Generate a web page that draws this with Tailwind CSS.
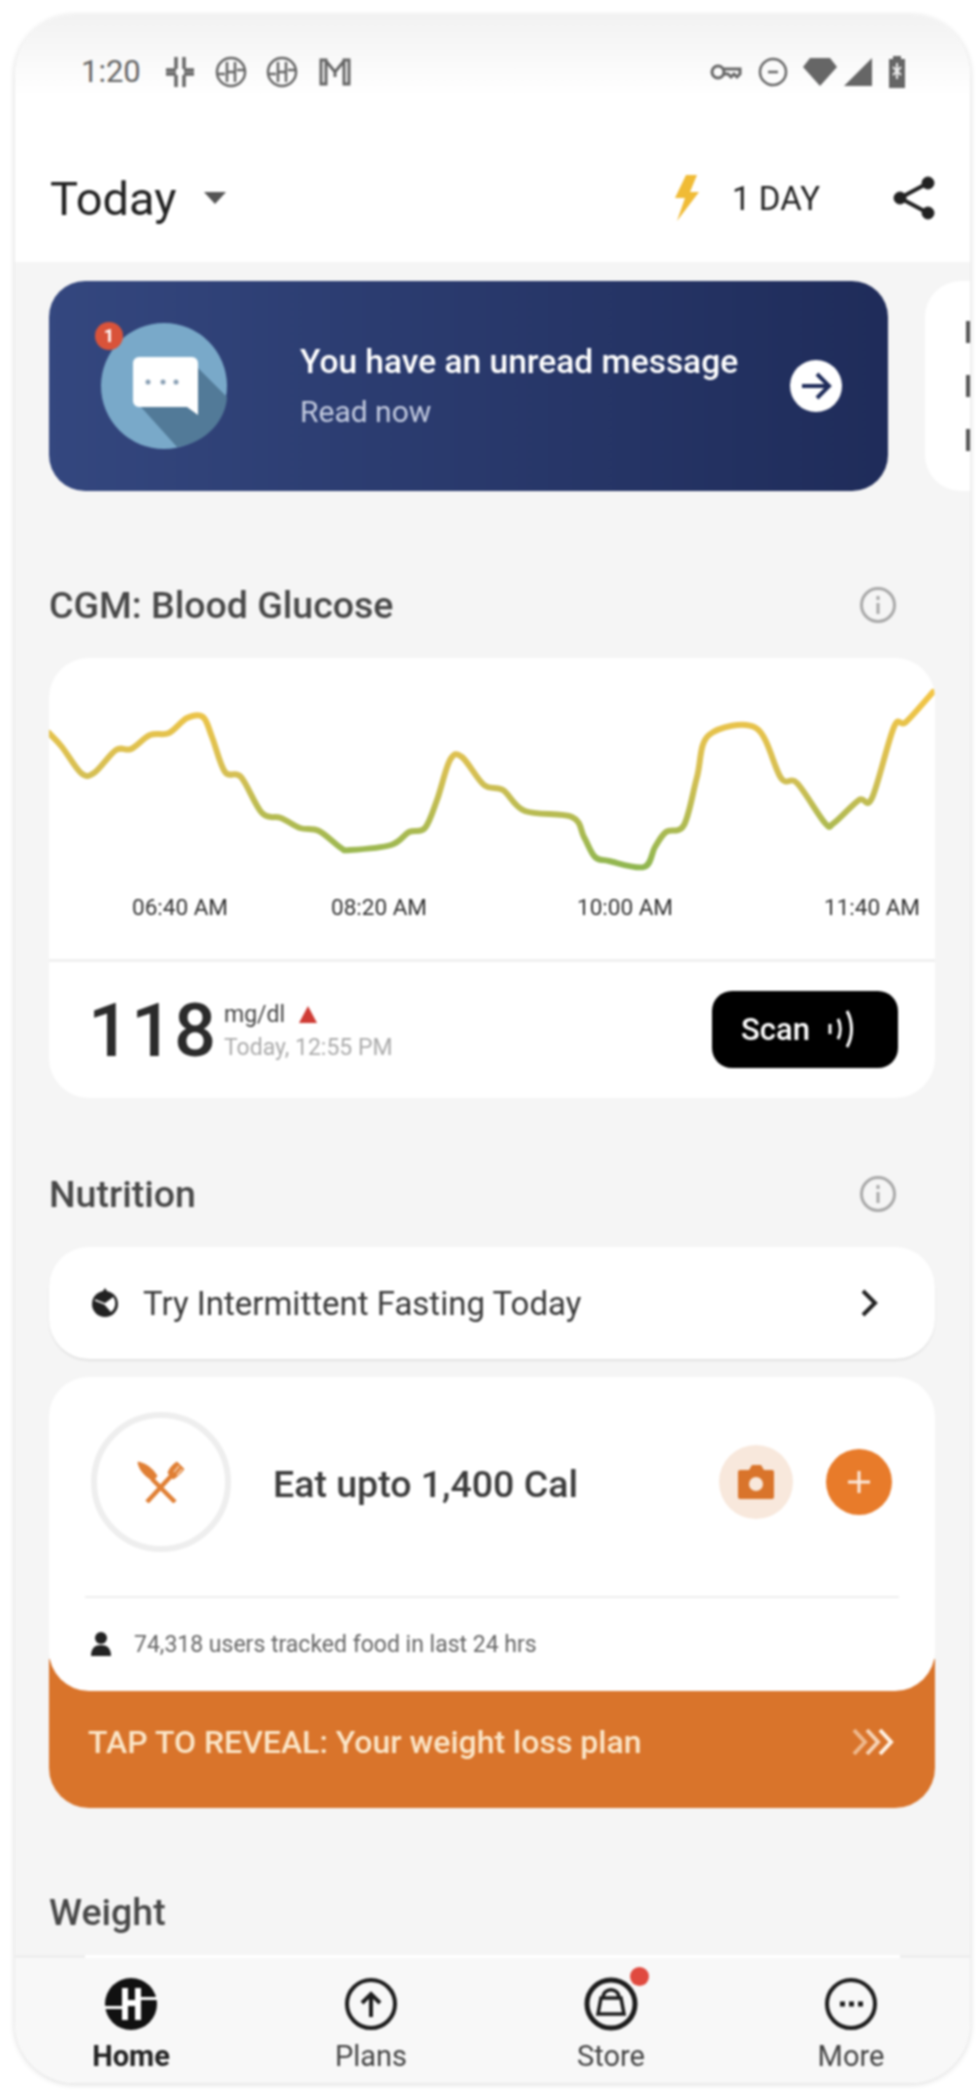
<!DOCTYPE html>
<html lang="en">
<head>
  <meta charset="UTF-8" />
  <title>Today</title>
  <script src="https://cdn.jsdelivr.net/npm/@tailwindcss/browser@4"></script>
</head>
<body class="bg-white font-['Roboto',sans-serif]">
  <div class="w-[980px] h-[2093px] pt-[15px] pl-[15px]">
    <div class="w-[955px] h-[2068px] rounded-[60px] overflow-hidden flex flex-col bg-white shadow-[0_1px_6px_rgba(0,0,0,0.16)] blur-[0.8px]">

      <!-- status bar -->
      <div class="h-[114px] shrink-0 pl-[66px] pr-[64px] flex items-center justify-between bg-linear-to-b from-[#f2f2f2] to-white to-70% text-[#666]">
        <div class="flex items-center">
          <span class="text-[31px] w-[83px]">1:20</span>
          <svg class="w-[32px] h-[32px] mr-[19px]" viewBox="0 0 32 32" fill="none" stroke="#666" stroke-width="3.5"><path d="M12 1v12M20 1v12M12 19v12M20 19v12M2 14h10M20 14h10M2 18h10M20 18h10"/></svg>
          <svg class="w-[32px] h-[32px] mr-[19px]" viewBox="0 0 32 32" fill="none" stroke="#666" stroke-width="2.5"><circle cx="16" cy="16" r="14"/><path d="M12 6v20M20 6v20M2 18h8M22 14h8M12 16h8"/></svg>
          <svg class="w-[32px] h-[32px] mr-[20px]" viewBox="0 0 32 32" fill="none" stroke="#666" stroke-width="2.5"><circle cx="16" cy="16" r="14"/><path d="M12 6v20M20 6v20M2 18h8M22 14h8M12 16h8"/></svg>
          <svg class="w-[34px] h-[30px]" viewBox="0 0 34 30" fill="none" stroke="#666" stroke-width="3"><path d="M3 3h5v24H3zM31 3h-5v24h5zM8 4l9 11 9-11M17 15v5"/></svg>
        </div>
        <div class="flex items-center">
          <svg class="w-[32px] h-[20px] mr-[16px]" viewBox="0 0 32 20" fill="none" stroke="#666" stroke-width="3"><circle cx="8" cy="10" r="6"/><path d="M14 7h16v5l-3 3-3-3-3 3-3-3h-4"/></svg>
          <svg class="w-[30px] h-[30px] mr-[14px]" viewBox="0 0 30 30" fill="none" stroke="#666" stroke-width="2.5"><circle cx="15" cy="15" r="13"/><path d="M10 15h10"/></svg>
          <svg class="w-[36px] h-[30px] mr-[6px]" viewBox="0 0 36 30" fill="#666"><path d="M8 1h20l7 9-17 19L1 10z"/></svg>
          <svg class="w-[28px] h-[28px] mr-[16px]" viewBox="0 0 28 28" fill="#666"><path d="M28 0v28H0z"/></svg>
          <svg class="w-[18px] h-[32px]" viewBox="0 0 18 32" fill="#666"><path d="M5 0h8v3h4v29H1V3h4z"/><path d="M9 7v16M5 11l8 8M5 19l8-8" stroke="#eee" stroke-width="2" fill="none"/></svg>
        </div>
      </div>

      <!-- header -->
      <div class="h-[133px] shrink-0 pl-[35px] pr-[34px] pt-[5px] flex items-center justify-between">
        <div class="flex items-center">
          <span class="text-[47px] leading-none text-[#222]">Today</span>
          <svg class="w-[22px] h-[12px] ml-[27px]" viewBox="0 0 22 12" fill="#555"><path d="M0 0h22L11 12z"/></svg>
        </div>
        <div class="flex items-center">
          <svg class="w-[28px] h-[46px] mr-[32px]" viewBox="0 0 28 46" fill="#f0bb35"><path d="M14 0h11l-7 17h9L5 46l8-23H3z"/></svg>
          <span class="text-[33px] leading-none text-[#222] mr-[72px]">1 DAY</span>
          <svg class="w-[44px] h-[46px]" viewBox="0 0 44 46" fill="#222" stroke="#222"><circle cx="36" cy="8" r="6"/><circle cx="36" cy="38" r="6"/><circle cx="8" cy="23" r="6"/><path d="M36 8L8 23l28 15" fill="none" stroke-width="4"/></svg>
        </div>
      </div>

      <!-- scrolling content -->
      <div class="flex-1 min-h-0 overflow-hidden bg-[#f5f5f5] pl-[34px]">
        <div class="mt-[19px] flex gap-[37px] w-[1000px]">
          <div class="w-[839px] h-[210px] shrink-0 rounded-[36px] bg-linear-to-r from-[#34477f] to-[#1f2c5a] flex items-center pl-[52px] pr-[46px]">
            <div class="relative w-[126px] h-[126px] shrink-0">
              <svg class="w-[126px] h-[126px]" viewBox="0 0 126 126">
                <circle cx="63" cy="63" r="63" fill="#79a9c9"/>
                <path d="M96 44l30 30c-1 22-20 46-50 50L40 84z" fill="#527a98"/>
                <path d="M38 34h53a6 6 0 0 1 6 6v52l-11-8H38a6 6 0 0 1-6-6V40a6 6 0 0 1 6-6z" fill="#fff"/>
                <circle cx="47" cy="59" r="2.5" fill="#8aa0b4"/><circle cx="62" cy="59" r="2.5" fill="#8aa0b4"/><circle cx="75" cy="59" r="2.5" fill="#8aa0b4"/>
              </svg>
              <div class="absolute -left-[6px] -top-[1px] w-[28px] h-[28px] rounded-full bg-[#d9533a] flex items-center justify-center text-[18px] leading-none font-bold text-white">1</div>
            </div>
            <div class="flex-1 pl-[73px] whitespace-nowrap">
              <div class="text-[33.5px] leading-none font-medium text-white">You have an unread message</div>
              <div class="text-[30px] leading-none text-[#c3cbe0] mt-[18px]">Read now</div>
            </div>
            <div class="w-[52px] h-[52px] rounded-full bg-white flex items-center justify-center shrink-0">
              <svg class="w-[34px] h-[30px]" viewBox="0 0 34 30" fill="none" stroke="#1f2c5a" stroke-width="4"><path d="M3 15h27M18 3l12 12-12 12"/></svg>
            </div>
          </div>
          <div class="w-[100px] h-[210px] shrink-0 rounded-[36px] bg-white pl-[41px] flex flex-col justify-center gap-[32px]">
            <div class="w-[4px] h-[22px] bg-[#555]"></div>
            <div class="w-[4px] h-[22px] bg-[#555]"></div>
            <div class="w-[4px] h-[22px] bg-[#555]"></div>
          </div>
        </div>

        <div class="mt-[94px] w-[886px] h-[40px] flex items-center justify-between pr-[38px]">
          <span class="text-[37.5px] font-medium text-[#484848]">CGM: Blood Glucose</span>
          <svg class="w-[38px] h-[38px]" viewBox="0 0 38 38" fill="none" stroke="#a8a8a8" stroke-width="3"><circle cx="19" cy="19" r="16.5"/><path d="M19 17v11M19 10v4"/></svg>
        </div>

        <div class="mt-[33px] w-[886px] h-[440px] rounded-[40px] bg-white overflow-hidden flex flex-col">
          <svg class="w-[886px] h-[301px] shrink-0" viewBox="0 1 886 301">
            <defs>
              <linearGradient id="glucose" gradientUnits="userSpaceOnUse" x1="0" y1="35" x2="0" y2="215">
                <stop offset="0" stop-color="#f3c544"/>
                <stop offset="0.45" stop-color="#d6bf53"/>
                <stop offset="1" stop-color="#8cb650"/>
              </linearGradient>
            </defs>
            <path id="curve" fill="none" stroke="url(#glucose)" stroke-width="6" stroke-linejoin="round" stroke-linecap="round"/>
            <g class="font-['Roboto',sans-serif]" font-size="22.5" fill="#333" text-anchor="middle">
              <text x="131" y="258">06:40 AM</text>
              <text x="330" y="258">08:20 AM</text>
              <text x="576" y="258">10:00 AM</text>
              <text x="823" y="258">11:40 AM</text>
            </g>
          </svg>
          <div class="h-[3px] shrink-0 bg-[#f0f0f0]"></div>
          <div class="flex-1 flex items-center pl-[39px] pr-[37px] pt-[2px]">
            <span class="text-[74px] leading-none font-medium text-[#2b2b2b] w-[136px] tracking-[1px]">118</span>
            <div class="flex-1">
              <div class="flex items-center text-[23px] leading-none text-[#444]">mg/dl
                <svg class="w-[18px] h-[17px] ml-[14px]" viewBox="0 0 18 17" fill="#cf3b34"><path d="M9 0l9 17H0z"/></svg>
              </div>
              <div class="text-[23px] leading-none text-[#aaa] mt-[10px]">Today, 12:55 PM</div>
            </div>
            <div class="w-[186px] h-[77px] rounded-[20px] bg-black flex items-center pl-[29px] mb-[4px]">
              <span class="text-[31px] font-medium text-white leading-none">Scan</span>
              <svg class="w-[30px] h-[44px] ml-[17px]" viewBox="0 0 30 44" fill="none" stroke="#fff" stroke-width="3"><path d="M3 17v10M11 12c3 6 3 14 0 20M20 4c6 11 6 25 0 36"/></svg>
            </div>
          </div>
        </div>

        <div class="mt-[76px] w-[886px] h-[40px] flex items-center justify-between pr-[38px]">
          <span class="text-[37.5px] font-medium text-[#484848]">Nutrition</span>
          <svg class="w-[38px] h-[38px]" viewBox="0 0 38 38" fill="none" stroke="#a8a8a8" stroke-width="3"><circle cx="19" cy="19" r="16.5"/><path d="M19 17v11M19 10v4"/></svg>
        </div>

        <div class="mt-[33px] w-[886px] h-[112px] rounded-[40px] bg-white shadow-[0_2px_2px_rgba(0,0,0,0.08)] flex items-center pl-[42px] pr-[56px]">
          <svg class="w-[28px] h-[32px] shrink-0" viewBox="0 0 28 32"><circle cx="14" cy="17" r="13" fill="#222"/><path d="M14 1l4 6h-8z" fill="#222"/><path d="M14 17l8-6a10 10 0 0 1-2 13zM14 17L4 13" fill="#fff" stroke="#fff" stroke-width="1.5"/></svg>
          <span class="flex-1 text-[33px] leading-none text-[#3a3a3a] ml-[24px]">Try Intermittent Fasting Today</span>
          <svg class="w-[20px] h-[30px]" viewBox="0 0 20 30" fill="none" stroke="#222" stroke-width="4"><path d="M4 3l12 12L4 27"/></svg>
        </div>

        <div class="mt-[18px] w-[886px]">
          <div class="relative z-10 h-[314px] rounded-[40px] bg-white">
            <div class="h-[219px] pl-[42px] pr-[43px] pt-[35px] flex items-start">
              <div class="w-[140px] h-[140px] shrink-0 rounded-full border-[6px] border-[#eeeeee] flex items-center justify-center">
                <svg class="w-[48px] h-[42px]" viewBox="0 0 48 42" fill="none" stroke="#e07f34"><path d="M1 1c9 2 15 7 19 14l-4 5C8 15 2 9 1 1z" fill="#e07f34" stroke-width="1"/><path d="M15 18L38 41" stroke-width="4.500"/><path d="M35 14L10 41" stroke-width="4.500"/><path d="M31 12c1-4 5-9 9-11l7 7c-3 4-7 8-11 10z" fill="#e07f34" stroke-width="1"/><path d="M37 11l5-6M40 14l5-6" stroke="#f6cfae" stroke-width="1.500"/></svg>
              </div>
              <span class="ml-[42px] mt-[54px] text-[37.5px] leading-none font-medium text-[#3c3c3c] flex-1">Eat upto 1,400 Cal</span>
              <div class="w-[74px] h-[74px] mt-[33px] rounded-full bg-[#f8e8dc] flex items-center justify-center">
                <svg class="w-[38px] h-[36px]" viewBox="0 0 38 36"><path d="M3 6h9l3-5h9l3 5h8a2 2 0 0 1 2 2v25a2 2 0 0 1-2 2H3a2 2 0 0 1-2-2V8a2 2 0 0 1 2-2z" fill="#d9742b"/><circle cx="19" cy="20" r="7" fill="#f8e8dc"/></svg>
              </div>
              <div class="w-[66px] h-[66px] mt-[37px] ml-[33px] rounded-full bg-[#e87b2a] flex items-center justify-center">
                <svg class="w-[24px] h-[24px]" viewBox="0 0 24 24" fill="none" stroke="#fbeadd" stroke-width="3"><path d="M12 1v22M1 12h22"/></svg>
              </div>
            </div>
            <div class="h-[2px] mx-[36px] bg-[#eeeeee]"></div>
            <div class="flex items-center pl-[42px] h-[93px] pb-[1px]">
              <svg class="w-[20px] h-[24px]" viewBox="0 0 20 24" fill="#222"><circle cx="10" cy="6" r="6"/><path d="M0 24c0-8 4-11 10-11s10 3 10 11z"/></svg>
              <span class="ml-[23px] text-[23px] leading-none text-[#666]">74,318 users tracked food in last 24 hrs</span>
            </div>
          </div>
          <div class="-mt-[32px] pt-[32px] h-[149px] rounded-b-[40px] bg-[#d9742b] flex items-center justify-between pl-[39px] pr-[38px]">
            <span class="text-[32px] leading-none font-medium text-[#fbe6c8] pb-[15px]">TAP TO REVEAL: Your weight loss plan</span>
            <svg class="w-[46px] h-[30px] mb-[15px]" viewBox="0 0 46 30" fill="none" stroke-width="4"><path d="M3 3l11 12L3 27" stroke="#eeb88c"/><path d="M16 3l11 12-11 12" stroke="#f6d3b5"/><path d="M29 3l11 12-11 12" stroke="#fff3e6"/></svg>
          </div>
        </div>

        <div class="mt-[84px] h-[40px] flex items-center">
          <span class="text-[37.5px] font-medium text-[#484848]">Weight</span>
        </div>
      </div>

      <!-- bottom nav -->
      <div class="h-[128px] shrink-0 bg-[#f8f8f8]">
        <div class="flex h-[3px]">
          <div class="w-[70px] bg-[#eeeeee]"></div>
          <div class="flex-1 bg-white"></div>
          <div class="w-[70px] bg-[#eeeeee]"></div>
        </div>
        <div class="grid grid-cols-[repeat(4,240px)] -ml-[4px] pt-[19px]">
          <div class="flex flex-col items-center">
            <svg class="w-[54px] h-[54px]" viewBox="0 0 54 54"><circle cx="27" cy="27" r="26" fill="#111"/><path d="M21 11v32M34 11v32M21 26h13" stroke="#fff" stroke-width="6" fill="none"/><path d="M0 30.500h20M35 21.500h19" stroke="#fff" stroke-width="3"/></svg>
            <span class="mt-[9px] text-[29px] leading-[32px] font-bold text-[#222]">Home</span>
          </div>
          <div class="flex flex-col items-center">
            <svg class="w-[54px] h-[54px]" viewBox="0 0 54 54" fill="none" stroke="#1c1c1c" stroke-width="4"><circle cx="27" cy="27" r="24"/><path d="M27 40V17M18 26l9-9 9 9"/></svg>
            <span class="mt-[9px] text-[29px] leading-[32px] text-[#444]">Plans</span>
          </div>
          <div class="relative flex flex-col items-center">
            <svg class="w-[54px] h-[54px]" viewBox="0 0 54 54" fill="none" stroke="#1c1c1c"><circle cx="27" cy="27" r="24" stroke-width="5"/><path d="M19 21c0-11 16-11 16 0" stroke-width="3.5"/><path d="M17 21h20l3 16H14z" stroke-width="3.5"/></svg>
            <div class="absolute left-[139px] -top-[10px] w-[19px] h-[19px] rounded-full bg-[#e04a3f]"></div>
            <span class="mt-[9px] text-[29px] leading-[32px] text-[#444]">Store</span>
          </div>
          <div class="flex flex-col items-center">
            <svg class="w-[54px] h-[54px]" viewBox="0 0 54 54" fill="none" stroke="#1c1c1c" stroke-width="4"><circle cx="27" cy="27" r="24"/><path d="M16 27h5M25 27h5M34 27h5" stroke-width="5"/></svg>
            <span class="mt-[9px] text-[29px] leading-[32px] text-[#444]">More</span>
          </div>
        </div>
      </div>

    </div>
  </div>
  <script>
    // glucose readings, in chart pixels, smoothed with catmull-rom
    const pts = [[0,76],[13,90],[32,116],[45,116],[67,93],[82,92],[101,78],[120,76],[138,61],[154,60],[163,80],[176,115],[192,120],[213,156],[232,161],[251,171],[270,174],[292,191],[301,193],[342,188],[360,175],[376,171],[388,143],[401,103],[413,100],[435,128],[454,133],[476,154],[523,160],[535,180],[546,200],[560,204],[595,210],[606,190],[617,175],[635,168],[648,120],[660,78],[707,71],[732,121],[748,126],[776,166],[785,166],[810,143],[823,141],[845,70],[857,65],[884,35]];
    let d = "M" + pts[0].join(" ");
    for (let i = 0; i < pts.length - 1; i++) {
      const a = pts[i - 1] || pts[i], b = pts[i], c = pts[i + 1], e = pts[i + 2] || c;
      d += " C" + (b[0] + (c[0] - a[0]) / 6) + " " + (b[1] + (c[1] - a[1]) / 6) + " " + (c[0] - (e[0] - b[0]) / 6) + " " + (c[1] - (e[1] - b[1]) / 6) + " " + c[0] + " " + c[1];
    }
    document.getElementById("curve").setAttribute("d", d);
  </script>
</body>
</html>
